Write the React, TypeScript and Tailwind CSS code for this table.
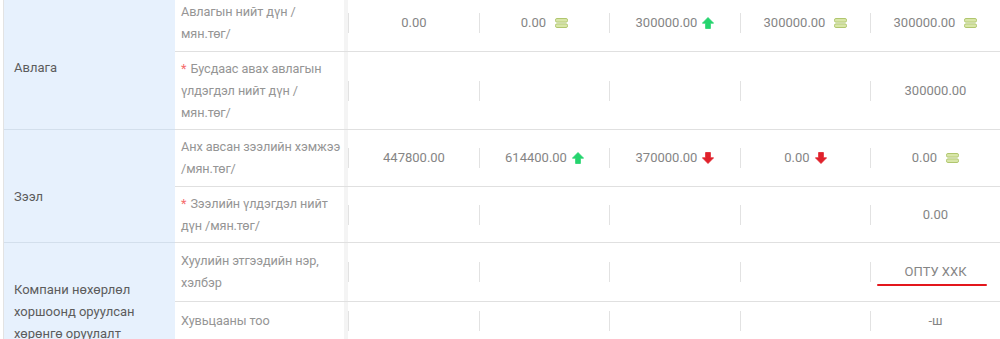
import React from "react";

type Mark = "eq" | "up" | "down" | null;

type Cell = { value?: string; mark?: Mark; underline?: boolean };

type Row = {
  lines: string[];
  required?: boolean;
  height: string;
  cells: Cell[];
};

type Group = {
  title: string[];
  pad: string;
  rows: Row[];
};

function EqualIcon() {
  return (
    <svg width="13" height="10" viewBox="0 0 13 10" className="ml-[9px] shrink-0">
      <rect x="0.5" y="0.5" width="12" height="3.6" rx="1.4" fill="#d8e6a8" stroke="#b0c66e" />
      <rect x="0.5" y="5.9" width="12" height="3.6" rx="1.4" fill="#d8e6a8" stroke="#b0c66e" />
    </svg>
  );
}

function UpIcon() {
  return (
    <svg width="12" height="12" viewBox="0 0 12 12" className="ml-[5px] shrink-0">
      <path d="M6 0.5 L11.6 6.2 L8.4 6.2 L8.4 11.5 L3.6 11.5 L3.6 6.2 L0.4 6.2 Z" fill="#25d46e" strokeLinejoin="round" stroke="#25d46e" strokeWidth="0.8" />
    </svg>
  );
}

function DownIcon() {
  return (
    <svg width="12" height="12" viewBox="0 0 12 12" className="ml-[5px] shrink-0">
      <path d="M6 11.5 L11.6 5.8 L8.4 5.8 L8.4 0.5 L3.6 0.5 L3.6 5.8 L0.4 5.8 Z" fill="#e0212b" strokeLinejoin="round" stroke="#e0212b" strokeWidth="0.8" />
    </svg>
  );
}

const groups: Group[] = [
  {
    title: ["Авлага"],
    pad: "pt-[62px]",
    rows: [
      {
        lines: ["Авлагын нийт дүн /", "мян.төг/"],
        height: "h-[57px]",
        cells: [
          { value: "0.00" },
          { value: "0.00", mark: "eq" },
          { value: "300000.00", mark: "up" },
          { value: "300000.00", mark: "eq" },
          { value: "300000.00", mark: "eq" },
        ],
      },
      {
        lines: ["Бусдаас авах авлагын", "үлдэгдэл нийт дүн /", "мян.төг/"],
        required: true,
        height: "h-[78px]",
        cells: [{}, {}, {}, {}, { value: "300000.00" }],
      },
    ],
  },
  {
    title: ["Зээл"],
    pad: "pt-[56px]",
    rows: [
      {
        lines: ["Анх авсан зээлийн хэмжээ", "/мян.төг/"],
        height: "h-[57px]",
        cells: [
          { value: "447800.00" },
          { value: "614400.00", mark: "up" },
          { value: "370000.00", mark: "down" },
          { value: "0.00", mark: "down" },
          { value: "0.00", mark: "eq" },
        ],
      },
      {
        lines: ["Зээлийн үлдэгдэл нийт", "дүн /мян.төг/"],
        required: true,
        height: "h-[56px]",
        cells: [{}, {}, {}, {}, { value: "0.00" }],
      },
    ],
  },
  {
    title: ["Компани нөхөрлөл", "хоршоонд оруулсан", "хөрөнгө оруулалт"],
    pad: "pt-[36px]",
    rows: [
      {
        lines: ["Хуулийн этгээдийн нэр,", "хэлбэр"],
        height: "h-[59px]",
        cells: [{}, {}, {}, {}, { value: "ОПТУ ХХК", underline: true }],
      },
      {
        lines: ["Хувьцааны тоо"],
        height: "h-[38px]",
        cells: [{}, {}, {}, {}, { value: "-ш" }],
      },
    ],
  },
];

const widths = ["w-[131px]", "w-[130px]", "w-[131px]", "w-[130px]", "w-[130px]"];

function DataCell({ cell, width }: { cell: Cell; width: string }) {
  return (
    <div className={`${width} flex shrink-0 items-center`}>
      <div className="relative flex h-[20px] w-full items-center justify-center border-l border-[#e2e2e2]">
        {cell.value && <span className="leading-[20px] text-[#858585]">{cell.value}</span>}
        {cell.mark === "eq" && <EqualIcon />}
        {cell.mark === "up" && <UpIcon />}
        {cell.mark === "down" && <DownIcon />}
        {cell.underline && (
          <div className="absolute left-[6px] top-[22px] h-[2px] w-[110px] rounded-full bg-[#e3161c]" />
        )}
      </div>
    </div>
  );
}

export default function App() {
  return (
    <div
      className="h-[339px] w-[1000px] overflow-hidden bg-white text-[13px]"
      style={{ fontFamily: "Roboto, 'Noto Sans', sans-serif" }}
    >
      <div className="-mt-[5px] ml-[3px] border-l border-[#e3e3e3]">
        {groups.map((g, gi) => (
          <div key={gi} className="flex">
            <div className={`w-[171px] shrink-0 border-b border-[#d3dfec] bg-[#e7f1fd] pl-[10px] ${g.pad} leading-[22px] text-[#5c5c5c]`}>
              {g.title.map((t) => (
                <div key={t}>{t}</div>
              ))}
            </div>
            <div className="flex flex-1 flex-col">
              {g.rows.map((r, ri) => (
                <div key={ri} className={`flex ${r.height} border-b border-[#e0e0e0]`}>
                  <div className="flex w-[169px] shrink-0 items-center whitespace-nowrap pl-[6px] text-[12.7px] leading-[22px] tracking-[-0.1px] text-[#959595]">
                    <div>
                      {r.lines.map((l, li) => (
                        <div key={li}>
                          {li === 0 && r.required && <span className="mr-[4px] text-[#f56c6c]">*</span>}
                          {l}
                        </div>
                      ))}
                    </div>
                  </div>
                  <div className="w-[4px] shrink-0 bg-[#f4f4f4]" />
                  {r.cells.map((c, ci) => (
                    <DataCell key={ci} cell={c} width={widths[ci]} />
                  ))}
                </div>
              ))}
            </div>
          </div>
        ))}
      </div>
    </div>
  );
}
